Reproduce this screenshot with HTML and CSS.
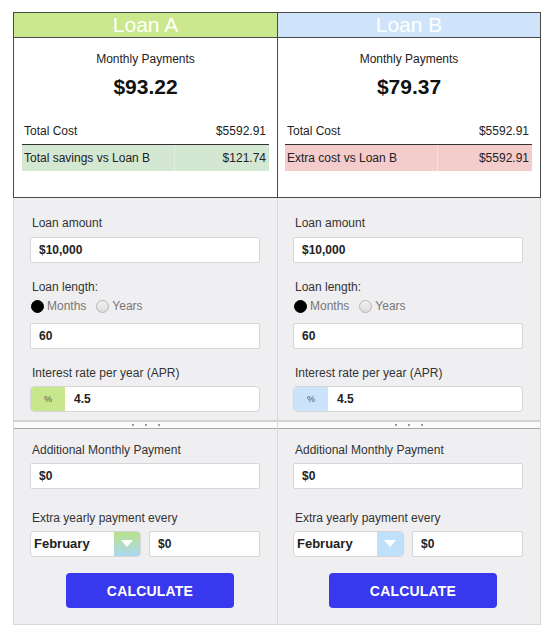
FILE: index.html
```html
<!DOCTYPE html>
<html>
<head>
<meta charset="utf-8">
<link rel="stylesheet" href="styles.css">
</head>
<body>
<div class="wrap">
  <div class="results">
    <div class="card">
      <div class="card-head head-a">Loan A</div>
      <div class="card-body">
        <div class="mp-label">Monthly Payments</div>
        <div class="mp-value">$93.22</div>
        <div class="row row-total"><span class="cell">Total Cost</span><span class="cell val">$5592.91</span></div>
        <div class="row row-diff diff-good"><span class="cell">Total savings vs Loan B</span><span class="cell val">$121.74</span></div>
      </div>
    </div>
    <div class="card card-right">
      <div class="card-head head-b">Loan B</div>
      <div class="card-body">
        <div class="mp-label">Monthly Payments</div>
        <div class="mp-value">$79.37</div>
        <div class="row row-total"><span class="cell">Total Cost</span><span class="cell val">$5592.91</span></div>
        <div class="row row-diff diff-bad"><span class="cell">Extra cost vs Loan B</span><span class="cell val">$5592.91</span></div>
      </div>
    </div>
  </div>

  <div class="inputs">
    <div class="col col-left">
      <div class="sec sec-top">
        <div class="lbl">Loan amount</div>
        <div class="field">$10,000</div>
        <div class="lbl lbl-gap">Loan length:</div>
        <div class="radios">
          <span class="radio checked"></span><span class="radio-text">Months</span>
          <span class="radio"></span><span class="radio-text">Years</span>
        </div>
        <div class="field">60</div>
        <div class="lbl lbl-gap">Interest rate per year (APR)</div>
        <div class="group">
          <span class="addon addon-a">%</span>
          <span class="group-input">4.5</span>
        </div>
      </div>
      <div class="splitter"><span class="dot"></span><span class="dot"></span><span class="dot"></span></div>
      <div class="sec sec-bottom">
        <div class="lbl">Additional Monthly Payment</div>
        <div class="field">$0</div>
        <div class="lbl lbl-gap2">Extra yearly payment every</div>
        <div class="pair">
          <div class="select">
            <span class="select-text">February</span>
            <span class="select-arrow arrow-a"><svg width="12" height="8" viewBox="0 0 12 8"><path d="M0 0H12L6 7Z" fill="#fff"/></svg></span>
          </div>
          <div class="field field-small">$0</div>
        </div>
        <button class="calc">CALCULATE</button>
      </div>
    </div>

    <div class="col col-right">
      <div class="sec sec-top">
        <div class="lbl">Loan amount</div>
        <div class="field">$10,000</div>
        <div class="lbl lbl-gap">Loan length:</div>
        <div class="radios">
          <span class="radio checked"></span><span class="radio-text">Months</span>
          <span class="radio"></span><span class="radio-text">Years</span>
        </div>
        <div class="field">60</div>
        <div class="lbl lbl-gap">Interest rate per year (APR)</div>
        <div class="group">
          <span class="addon addon-b">%</span>
          <span class="group-input">4.5</span>
        </div>
      </div>
      <div class="splitter"><span class="dot"></span><span class="dot"></span><span class="dot"></span></div>
      <div class="sec sec-bottom">
        <div class="lbl">Additional Monthly Payment</div>
        <div class="field">$0</div>
        <div class="lbl lbl-gap2">Extra yearly payment every</div>
        <div class="pair">
          <div class="select">
            <span class="select-text">February</span>
            <span class="select-arrow arrow-b"><svg width="12" height="8" viewBox="0 0 12 8"><path d="M0 0H12L6 7Z" fill="#fff"/></svg></span>
          </div>
          <div class="field field-small">$0</div>
        </div>
        <button class="calc">CALCULATE</button>
      </div>
    </div>
  </div>
</div>
</body>
</html>
```

FILE: styles.css
```css
* { box-sizing: border-box; }
html, body { margin: 0; padding: 0; background: #fff; }
body { font-family: "Liberation Sans", Arial, sans-serif; color: #222; }

.wrap { width: 528px; margin: 12px 0 0 13px; }

.results {
  display: grid;
  grid-template-columns: 263px 263px;
  border: 1px solid #4a4a4a;
}
.card-right { border-left: 1px solid #4a4a4a; }

.card-head {
  height: 25px;
  line-height: 24px;
  text-align: center;
  color: #fff;
  font-size: 21px;
  border-bottom: 1px solid #4a4a4a;
}
.head-a { background: #cbe88e; }
.head-b { background: #cfe4fb; }

.card-body { height: 159px; padding-top: 14px; }
.mp-label { text-align: center; font-size: 12px; line-height: 15px; color: #222; }
.mp-value { text-align: center; font-size: 21px; font-weight: bold; line-height: 24px; margin-top: 8px; color: #111; }

.row {
  display: grid;
  grid-template-columns: 152px 1fr;
  column-gap: 1px;
  margin-left: 8px;
  margin-right: 8px;
  font-size: 12px;
}
.row .cell { padding-left: 2px; }
.row .val { text-align: right; padding-right: 3px; }
.row-total { margin-top: 20px; height: 26px; line-height: 24px; border-bottom: 1px solid #333; }
.row-diff { height: 26px; line-height: 26px; }
.diff-good { background: #e2efe1; }
.diff-good .cell { background: #d4e7d3; }
.diff-bad { background: #f8dede; }
.diff-bad .cell { background: #f4cccc; }
.card-right .row { margin-left: 7px; margin-right: 8px; }

.inputs {
  display: grid;
  grid-template-columns: 263px 263px;
  background: #efeff1;
  border: 1px solid #d9d9d9;
  border-top: none;
}
.col-right { border-left: 1px solid #d9d9d9; }

.sec { padding-left: 16px; padding-right: 17px; }
.col-right .sec { padding-left: 15px; padding-right: 17px; }
.sec-top { padding-top: 18px; padding-bottom: 8px; }
.sec-bottom { padding-top: 14px; padding-bottom: 16px; }

.lbl { font-size: 12px; line-height: 14px; color: #333; margin-left: 2px; margin-bottom: 7px; }
.lbl-gap { margin-top: 17px; }
.lbl-gap2 { margin-top: 22px; margin-bottom: 6px; }
.sec-bottom .lbl:first-child { margin-bottom: 6px; }

.field {
  height: 26px;
  background: #fff;
  border: 1px solid #d6d6d6;
  border-radius: 2px;
  font-size: 12px;
  font-weight: bold;
  line-height: 24px;
  padding-left: 8px;
  color: #222;
}

.radios { display: flex; align-items: center; height: 14px; margin: -2px 0 10px 1px; }
.radio {
  width: 13px; height: 13px;
  border-radius: 50%;
  border: 1px solid #b5b5b5;
  background: linear-gradient(#f2f2f2, #dcdcdc);
}
.radio.checked { background: #000; border-color: #000; }
.radio-text { font-size: 12px; color: #777; margin-left: 3px; margin-right: 10px; }

.group {
  display: flex;
  height: 26px;
  margin-top: -1px;
  background: #fff;
  border: 1px solid #d6d6d6;
  border-radius: 4px;
  overflow: hidden;
}
.addon {
  width: 34px;
  text-align: center;
  font-size: 9px;
  line-height: 24px;
  color: #555;
}
.addon-a { background: #c8e68b; }
.addon-b { background: #cbe4fb; }
.group-input { font-size: 12px; font-weight: bold; line-height: 24px; padding-left: 9px; color: #222; }

.splitter {
  height: 9px;
  background: #fbfbfb;
  border-top: 2px solid #d2d2d2;
  border-bottom: 1px solid #a9a9a9;
  display: flex;
  justify-content: center;
  align-items: center;
  gap: 11px;
}
.dot { width: 2px; height: 2px; background: #999; }

.pair { display: flex; gap: 8px; }
.select {
  width: 111px;
  height: 26px;
  display: flex;
  background: #fff;
  border: 1px solid #d6d6d6;
  border-radius: 4px;
  overflow: hidden;
}
.select-text { flex: 1; font-size: 13px; font-weight: bold; line-height: 24px; padding-left: 3px; color: #222; }
.select-arrow { width: 26px; display: flex; align-items: center; justify-content: center; }
.arrow-a { background: linear-gradient(#b8e28a, #a9d8f2); }
.arrow-b { background: #bfe0fb; }
.field-small { flex: 1; padding-left: 8px; }

.calc {
  display: block;
  margin: 16px 0 0 36px;
  width: 168px;
  height: 35px;
  border: none;
  border-radius: 4px;
  background: #3838ee;
  color: #fff;
  font-family: "Liberation Sans", Arial, sans-serif;
  font-size: 14px;
  font-weight: bold;
  letter-spacing: 0.2px;
}
```
